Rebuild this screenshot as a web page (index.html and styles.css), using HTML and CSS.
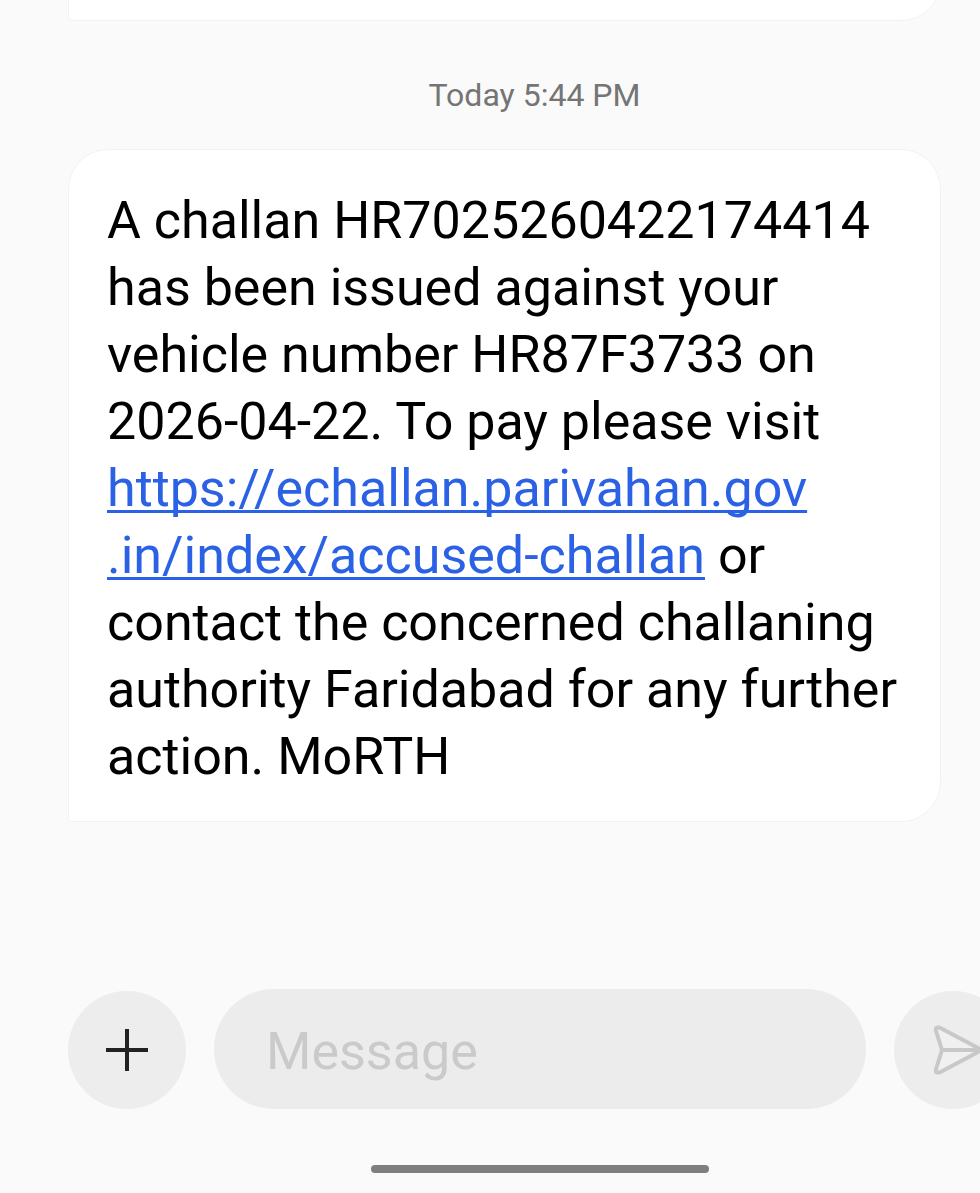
FILE: index.html
```html
<!DOCTYPE html>
<html lang="en">
  <head>
    <meta charset="UTF-8" />
    <meta name="viewport" content="width=device-width, initial-scale=1.0" />
    <title>Messages</title>
    <link rel="stylesheet" href="styles.css" />
  </head>

  <body>
    <main class="thread">
      <div class="bubble bubble-previous"></div>
      <time class="date">Today 5:44 PM</time>
      <p class="bubble">
        A challan HR7025260422174414 has been issued against your vehicle number
        HR87F3733 on 2026-04-22. To pay please visit
        <a href="https://echallan.parivahan.gov.in/index/accused-challan">https://echallan.parivahan.gov<wbr />.in/index/accused-challan</a>
        or contact the concerned challaning authority Faridabad for any further
        action. MoRTH
      </p>
    </main>

    <form class="composer">
      <button class="round" type="button" aria-label="Add attachment">
        <svg width="44" height="44" viewBox="0 0 44 44" fill="none" stroke="#222" stroke-width="4">
          <path d="M1 22h42M22 1v42" />
        </svg>
      </button>
      <input class="message" type="text" placeholder="Message" aria-label="Message" />
      <button class="round" type="submit" aria-label="Send">
        <svg width="64" height="64" viewBox="-4 -4 64 64" fill="none" stroke="#c8c8c8" stroke-width="4" stroke-linejoin="round">
          <path fill="#f0f0f0" d="M15.500 6 57 28 15.500 50Q10 52 11 47L17 28 11 9Q10 4 15.500 6Z" />
          <path d="M17 28h40" />
        </svg>
      </button>
    </form>
    <div class="home-bar"></div>
  </body>
</html>
```
FILE: styles.css
```css
* {
  box-sizing: border-box;
}

body {
  display: flex;
  flex-direction: column;
  height: 100vh;
  margin: 0;
  overflow: hidden;
  background: #fafafa;
  font-family: Roboto, "Liberation Sans", sans-serif;
}

/* newest message sits at the bottom, older ones run off the top */
.thread {
  display: flex;
  flex: 1;
  flex-direction: column;
  justify-content: flex-end;
  min-height: 0;
  padding: 0 39px 167px 68px;
  overflow: hidden;
}

.bubble {
  flex-shrink: 0;
  margin: 0;
  padding: 37px 32px 31px 38px;
  border: 1px solid #f2f2f2;
  border-radius: 40px 40px 40px 4px;
  background: #fff;
  color: #000;
  font-size: 52px;
  line-height: 67px;
}

.bubble-previous {
  min-height: 120px;
}

.bubble a {
  color: #2b61e4;
  text-decoration-thickness: 3px;
  text-decoration-skip-ink: none;
  text-underline-offset: 4px;
}

.date {
  flex-shrink: 0;
  padding: 54px 0 34px 60px;
  color: #757575;
  font-size: 32px;
  line-height: 40px;
  text-align: center;
}

.composer {
  display: flex;
  align-items: flex-end;
  gap: 28px;
  margin: 0 -32px 0 68px;
}

.round {
  display: flex;
  flex-shrink: 0;
  align-items: center;
  justify-content: center;
  width: 118px;
  height: 118px;
  padding: 0;
  border: 0;
  border-radius: 50%;
  background: #ededed;
}

.message {
  flex: 1;
  min-width: 0;
  height: 120px;
  padding: 4px 52px 0;
  border: 0;
  border-radius: 60px;
  background: #ececec;
  color: #000;
  font-family: inherit;
  font-size: 52px;
}

.message::placeholder {
  color: #cacaca;
  opacity: 1;
}

.home-bar {
  align-self: center;
  width: 338px;
  height: 8px;
  margin: 56px 0 20px 100px;
  border-radius: 4px;
  background: #7e7e7e;
}
```
